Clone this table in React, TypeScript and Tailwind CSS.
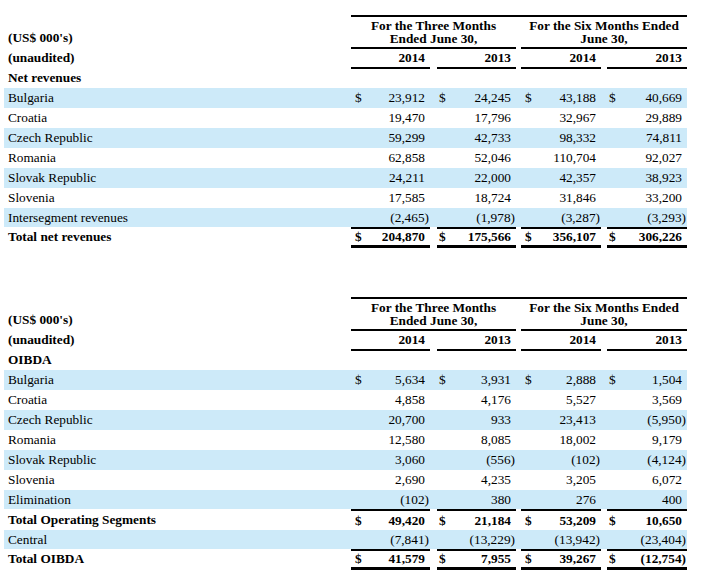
import React from "react";

type Row = {
  label: string;
  vals: string[];
  shaded?: boolean;
  dollar?: boolean;
  kind?: "normal" | "pre" | "total" | "topOnly";
};

const CELL = [
  "w-[79px]",
  "w-[79px] ml-[7px]",
  "w-[80px] ml-[5px]",
  "w-[80px] ml-[6px]",
];
const DPAD = ["pl-[4px]", "pl-[2px]", "pl-[4px]", "pl-[2px]"];

function Header({ label3 }: { label3: string }) {
  return (
    <div className="flex h-[88px]">
      <div className="w-[347px] pl-[4px] pt-[28px] font-bold">
        <div className="h-[20px] leading-[20px]">(US$ 000's)</div>
        <div className="h-[20px] leading-[20px]">(unaudited)</div>
        <div className="h-[20px] leading-[20px]">{label3}</div>
      </div>
      <div className="w-[336px]">
        <div className="mt-[15px] border-t-2 border-black">
          <div className="flex">
            <div className="w-[165px] h-[32px] border-b-2 border-black flex flex-col items-center justify-center font-bold leading-[13.5px]">
              <span>For the Three Months</span>
              <span>Ended June 30,</span>
            </div>
            <div className="ml-[5px] w-[166px] h-[32px] border-b-2 border-black flex flex-col items-center justify-center font-bold leading-[13.5px]">
              <span>For the Six Months Ended</span>
              <span>June 30,</span>
            </div>
          </div>
          <div className="flex">
            {["2014", "2013", "2014", "2013"].map((y, i) => (
              <div
                key={i}
                className={`${CELL[i]} h-[20px] border-b-2 border-black text-right pr-[5px] font-bold leading-[18px]`}
              >
                {y}
              </div>
            ))}
          </div>
        </div>
      </div>
    </div>
  );
}

function DataRow({ r }: { r: Row }) {
  const kind = r.kind ?? "normal";
  const h =
    kind === "pre" ? "h-[19px]" : kind === "normal" ? "h-[20px]" : "h-[21px]";
  const bold = kind === "total" || kind === "topOnly";
  const border =
    kind === "total"
      ? "border-t-2 border-b-[3px] border-black"
      : kind === "topOnly"
      ? "border-t-2 border-black"
      : "";
  return (
    <div className={`flex ${h} ${r.shaded ? "bg-[#cdeaf9]" : ""}`}>
      <div
        className={`w-[347px] pl-[4px] flex items-center ${bold ? "font-bold" : ""} ${
          kind === "total" ? "pb-[1px]" : ""
        }`}
      >
        {r.label}
      </div>
      {r.vals.map((v, i) => {
        const neg = v.startsWith("(");
        return (
          <div
            key={i}
            className={`${CELL[i]} h-full flex items-center justify-between ${border} ${
              bold ? "font-bold" : ""
            }`}
          >
            <span className={DPAD[i]}>{r.dollar ? "$" : ""}</span>
            <span className={neg ? "pr-[1px]" : "pr-[5px]"}>{v}</span>
          </div>
        );
      })}
    </div>
  );
}

const T1: Row[] = [
  { label: "Bulgaria", vals: ["23,912", "24,245", "43,188", "40,669"], shaded: true, dollar: true },
  { label: "Croatia", vals: ["19,470", "17,796", "32,967", "29,889"] },
  { label: "Czech Republic", vals: ["59,299", "42,733", "98,332", "74,811"], shaded: true },
  { label: "Romania", vals: ["62,858", "52,046", "110,704", "92,027"] },
  { label: "Slovak Republic", vals: ["24,211", "22,000", "42,357", "38,923"], shaded: true },
  { label: "Slovenia", vals: ["17,585", "18,724", "31,846", "33,200"] },
  { label: "Intersegment revenues", vals: ["(2,465)", "(1,978)", "(3,287)", "(3,293)"], shaded: true, kind: "pre" },
  { label: "Total net revenues", vals: ["204,870", "175,566", "356,107", "306,226"], dollar: true, kind: "total" },
];

const T2: Row[] = [
  { label: "Bulgaria", vals: ["5,634", "3,931", "2,888", "1,504"], shaded: true, dollar: true },
  { label: "Croatia", vals: ["4,858", "4,176", "5,527", "3,569"] },
  { label: "Czech Republic", vals: ["20,700", "933", "23,413", "(5,950)"], shaded: true },
  { label: "Romania", vals: ["12,580", "8,085", "18,002", "9,179"] },
  { label: "Slovak Republic", vals: ["3,060", "(556)", "(102)", "(4,124)"], shaded: true },
  { label: "Slovenia", vals: ["2,690", "4,235", "3,205", "6,072"] },
  { label: "Elimination", vals: ["(102)", "380", "276", "400"], shaded: true, kind: "pre" },
  { label: "Total Operating Segments", vals: ["49,420", "21,184", "53,209", "10,650"], dollar: true, kind: "topOnly" },
  { label: "Central", vals: ["(7,841)", "(13,229)", "(13,942)", "(23,404)"], shaded: true, kind: "pre" },
  { label: "Total OIBDA", vals: ["41,579", "7,955", "39,267", "(12,754)"], dollar: true, kind: "total" },
];

export default function App() {
  return (
    <div
      className="w-[702px] h-[588px] bg-white text-black text-[13.3px] overflow-hidden"
      style={{ fontFamily: '"Liberation Serif", "Times New Roman", serif' }}
    >
      <div className="ml-[4px] w-[683px]">
        <Header label3="Net revenues" />
        {T1.map((r, i) => (
          <DataRow key={i} r={r} />
        ))}
        <div className="h-[34px]" />
        <Header label3="OIBDA" />
        {T2.map((r, i) => (
          <DataRow key={i} r={r} />
        ))}
      </div>
    </div>
  );
}
